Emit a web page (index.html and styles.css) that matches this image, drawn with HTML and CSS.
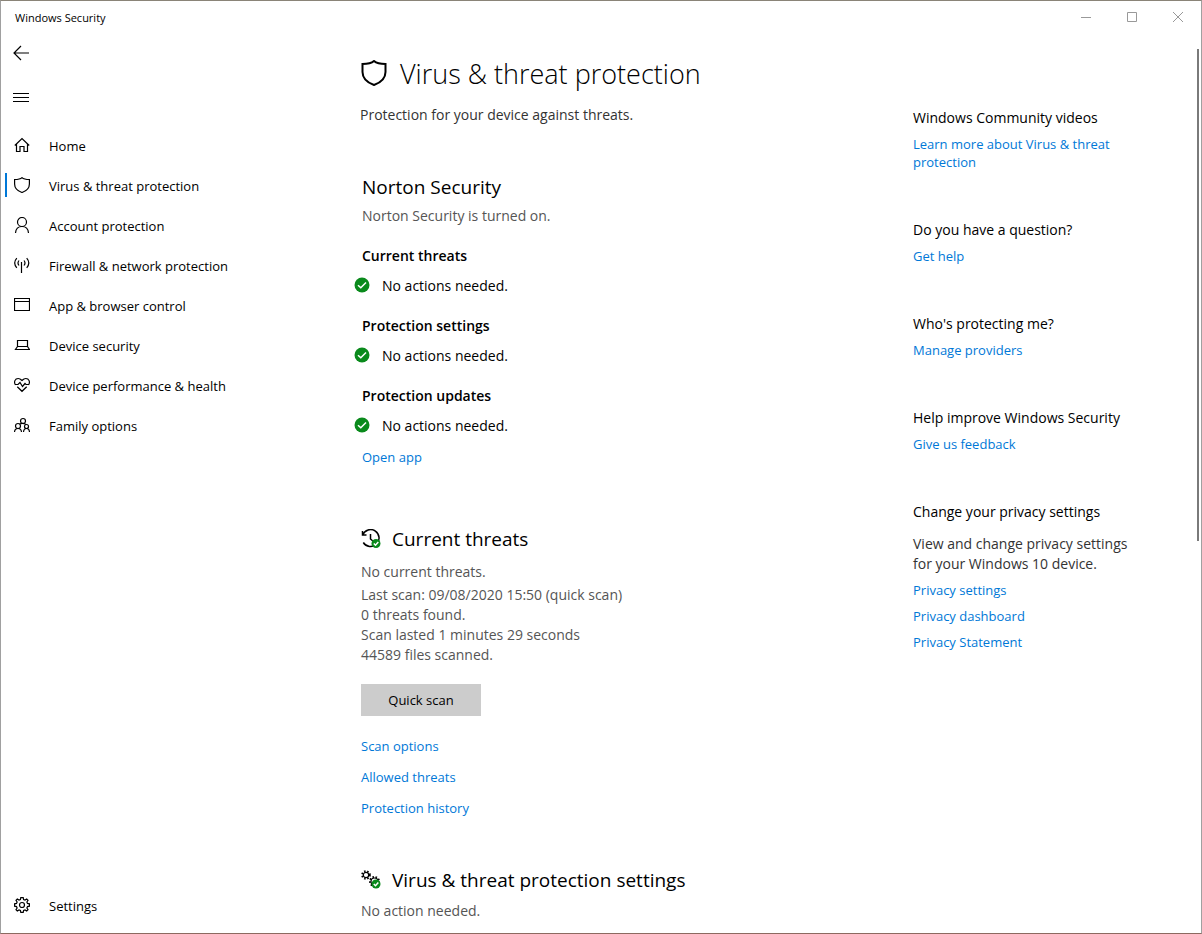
FILE: index.html
```html
<!DOCTYPE html>
<html lang="en">
<head>
    <meta charset="UTF-8">
    <meta name="viewport" content="width=device-width, initial-scale=1.0">
    <title>Windows Security</title>
    <link rel="stylesheet" href="styles.css">
</head>

<body>

    <div class="window">

        <header class="titlebar">
            <span class="titlebar-text">Windows Security</span>
            <div class="window-buttons">
                <button type="button" aria-label="Minimize"><svg width="10" height="10" viewBox="0 0 10 10"><path d="M0 5.5H10"/></svg></button>
                <button type="button" aria-label="Maximize"><svg width="10" height="10" viewBox="0 0 10 10"><path d="M.5 .5H9.5V9.5H.5Z"/></svg></button>
                <button type="button" aria-label="Close"><svg width="10" height="10" viewBox="0 0 10 10"><path d="M0 0L10 10M10 0L0 10"/></svg></button>
            </div>
        </header>

        <nav class="sidebar">
            <button type="button" class="nav-button" aria-label="Back">
                <svg width="16" height="16" viewBox="0 0 16 16"><path d="M16 8H1M8 1L1 8L8 15"/></svg>
            </button>
            <button type="button" class="nav-button" aria-label="Menu">
                <svg width="16" height="16" viewBox="0 0 16 16"><path d="M0 4.5H16M0 8.5H16M0 12.5H16"/></svg>
            </button>

            <ul class="menu">
                <li><a href="#home">
                    <svg width="16" height="16" viewBox="0 0 16 16"><path d="M.8 8.500L8 1.500L15.200 8.500M2.500 7V14.500H6V9.500H10V14.500H13.500V7"/></svg>
                    Home</a></li>
                <li><a href="#virus" class="active">
                    <svg width="16" height="16" viewBox="0 0 16 16"><path d="M8 .6C6.500 2 3.500 2.500 .6 2.500V7C.6 11 3.500 14 8 15.500C12.500 14 15.400 11 15.400 7V2.500C12.500 2.500 9.500 2 8 .6Z"/></svg>
                    Virus &amp; threat protection</a></li>
                <li><a href="#account">
                    <svg width="16" height="16" viewBox="0 0 16 16"><circle cx="8" cy="5" r="4.500"/><path d="M1.500 16C1.800 12 4.500 9.500 8 9.500S14.200 12 14.500 16"/></svg>
                    Account protection</a></li>
                <li><a href="#firewall">
                    <svg width="16" height="16" viewBox="0 0 16 16"><path d="M7.500 5V16M5 3.500Q3 6 5 8.500M10 3.500Q12 6 10 8.500M2.800 1.200Q-1.400 6 2.800 10.800M12.700 1.200Q16.900 6 12.700 10.800"/></svg>
                    Firewall &amp; network protection</a></li>
                <li><a href="#app">
                    <svg width="16" height="16" viewBox="0 0 16 16"><path d="M.5 1.500H15.500V13.500H.5ZM.5 4.500H15.500"/></svg>
                    App &amp; browser control</a></li>
                <li><a href="#device">
                    <svg width="16" height="16" viewBox="0 0 16 16"><path d="M3.500 9.500V3.500H13.500V9.500M3.500 9.500H13.500L15.500 12.500H1.500Z"/></svg>
                    Device security</a></li>
                <li><a href="#performance">
                    <svg width="16" height="16" viewBox="0 0 16 16"><path d="M1.500 8C-.5 5 1 1.500 4.200 1.500C6 1.500 7 2.500 8 3.500C9 2.500 10 1.500 11.800 1.500C15 1.500 16.500 5 14.500 8M3.300 9.700L8 14.300L12.700 9.700M1.500 7.500H4L6 5.500L8.500 9.500L11 6.500L12 7.500H14.500"/></svg>
                    Device performance &amp; health</a></li>
                <li><a href="#family">
                    <svg width="16" height="16" viewBox="0 0 16 16"><circle cx="9" cy="4" r="2.500"/><circle cx="4" cy="9" r="2.500"/><circle cx="12.500" cy="9.500" r="2"/><path d="M.5 15C.7 12.500 2 11.500 4 11.500S7.300 12.500 7.500 15M9.500 15C9.700 12.500 10.800 11.500 12.500 11.500S15.300 12.500 15.500 15M5.500 7Q9 5.500 12 7.500"/></svg>
                    Family options</a></li>
            </ul>

            <a href="#settings" class="menu-settings">
                <svg width="16" height="16" viewBox="0 0 16 16"><circle cx="8" cy="8" r="2.500"/><path d="M6.800 .6H9.200L9.600 2.500L11 3.100L12.700 2L14 3.300L12.900 5L13.500 6.400L15.400 6.800V9.200L13.500 9.600L12.900 11L14 12.700L12.700 14L11 12.900L9.600 13.500L9.200 15.400H6.800L6.400 13.500L5 12.900L3.300 14L2 12.700L3.100 11L2.500 9.600L.6 9.200V6.800L2.500 6.400L3.100 5L2 3.300L3.300 2L5 3.100L6.400 2.500Z"/></svg>
                Settings</a>
        </nav>

        <main class="content">
            <h1>
                <svg width="26" height="26" viewBox="0 0 26 26"><path d="M13 1C10.500 3.200 6 4 1.500 4V12C1.500 18 6 22.500 13 25C20 22.500 24.500 18 24.500 12V4C20 4 15.500 3.200 13 1Z"/></svg>
                Virus &amp; threat protection</h1>
            <p class="intro">Protection for your device against threats.</p>

            <section class="provider">
                <h2>Norton Security</h2>
                <p class="note">Norton Security is turned on.</p>
                <h3>Current threats</h3>
                <p class="status"><svg class="check" width="16" height="16" viewBox="0 0 16 16"><circle cx="8" cy="8" r="7.500"/><path d="M4 8.200L6.800 10.800L12 5.500"/></svg>No actions needed.</p>
                <h3>Protection settings</h3>
                <p class="status"><svg class="check" width="16" height="16" viewBox="0 0 16 16"><circle cx="8" cy="8" r="7.500"/><path d="M4 8.200L6.800 10.800L12 5.500"/></svg>No actions needed.</p>
                <h3>Protection updates</h3>
                <p class="status"><svg class="check" width="16" height="16" viewBox="0 0 16 16"><circle cx="8" cy="8" r="7.500"/><path d="M4 8.200L6.800 10.800L12 5.500"/></svg>No actions needed.</p>
                <a href="#open">Open app</a>
            </section>

            <section class="threats">
                <h2>
                    <svg width="20" height="20" viewBox="0 0 20 20"><path d="M1.500 2V6H5.500M1.700 5.800A8.500 8.500 0 1 1 2.300 13.500M9.500 5V10L12.500 12.500" stroke-width="1.500"/><g class="check"><circle cx="15" cy="14.500" r="4.500"/><path d="M12.800 14.500L14.500 16.200L17.300 13.100"/></g></svg>
                    Current threats</h2>
                <p class="note">No current threats.</p>
                <p class="scan">Last scan: 09/08/2020 15:50 (quick scan)<br>
                    0 threats found.<br>
                    Scan lasted 1 minutes 29 seconds<br>
                    44589 files scanned.</p>
                <button type="button" class="scan-button">Quick scan</button>
                <ul class="links">
                    <li><a href="#options">Scan options</a></li>
                    <li><a href="#allowed">Allowed threats</a></li>
                    <li><a href="#history">Protection history</a></li>
                </ul>
            </section>

            <section class="protection">
                <h2>
                    <svg width="20" height="20" viewBox="0 0 20 20"><circle cx="5" cy="5" r="2.700"/><circle class="teeth" cx="5" cy="5" r="3.800"/><circle cx="13.500" cy="11.500" r="3.500"/><circle class="teeth" cx="13.500" cy="11.500" r="4.500"/><g class="check"><circle cx="15" cy="14" r="4.500"/><path d="M12.800 14L14.500 15.700L17.300 12.600"/></g></svg>
                    Virus &amp; threat protection settings</h2>
                <p class="note">No action needed.</p>
            </section>
        </main>

        <aside class="help">
            <section>
                <h4>Windows Community videos</h4>
                <a href="#learn">Learn more about Virus &amp; threat protection</a>
            </section>
            <section>
                <h4>Do you have a question?</h4>
                <a href="#help">Get help</a>
            </section>
            <section>
                <h4>Who's protecting me?</h4>
                <a href="#providers">Manage providers</a>
            </section>
            <section>
                <h4>Help improve Windows Security</h4>
                <a href="#feedback">Give us feedback</a>
            </section>
            <section>
                <h4>Change your privacy settings</h4>
                <p>View and change privacy settings for your Windows 10 device.</p>
                <a href="#privacy">Privacy settings</a>
                <a href="#dashboard">Privacy dashboard</a>
                <a href="#statement">Privacy Statement</a>
            </section>
        </aside>

        <div class="scrollbar"></div>
    </div>

</body>
</html>
```

FILE: styles.css
```css
@charset "utf-8";

*{    box-sizing: border-box;    margin: 0px;    padding: 0px;}

body{
    font-family: "Open Sans", "Noto Sans", sans-serif;
    font-size: 14px;
    line-height: 20px;
    color: #000;
    background: #fff;
}

a{
    color: #0078d7;
    font-size: 13px;
    text-decoration: none;
}

ul{    list-style: none;}

button{
    font-family: inherit;
    color: inherit;
    border: none;
    background: none;
}

svg{
    flex: none;
    fill: none;
    stroke: #000;
    stroke-width: 1.2px;
}

/* window frame */
.window{
    display: grid;
    grid-template-columns: 353px 1fr 280px 8px;
    grid-template-rows: 34px 1fr;
    height: 100vh;
    overflow: hidden;
    border: 1px solid #a0a0a0;
    border-top-color: #8a8478;
    border-bottom-color: #8c6a60;
}

.titlebar{
    grid-column: 1 / -1;
    display: flex;
    justify-content: space-between;
    padding-left: 14px;
}

.titlebar-text{
    font-size: 11px;
    line-height: 34px;
}

.window-buttons{    display: flex;}

.window-buttons button{
    width: 46px;
    height: 32px;
}

.window-buttons svg{
    stroke: #999;
    stroke-width: 1px;
}

/* left menu */
.sidebar{
    display: flex;
    flex-direction: column;
    min-height: 0;
    padding-bottom: 7px;
}

.nav-button{
    display: flex;
    align-items: center;
    width: 48px;
    height: 36px;
    padding-left: 12px;
    margin-bottom: 8px;
}

.menu{    margin-top: 3px;}

.menu a, .menu-settings{
    display: flex;
    align-items: center;
    gap: 19px;
    height: 40px;
    padding-left: 13px;
    color: #000;
}

.menu svg, .menu-settings svg{    margin-bottom: 2px;}

.menu .active{
    background: linear-gradient(#0078d7, #0078d7) 4px 7px / 2px 24px no-repeat;
}

.menu-settings{    margin-top: auto;}

/* middle column */
.content{
    min-height: 0;
    overflow: hidden;
    padding-top: 21px;
}

h1{
    display: flex;
    align-items: center;
    gap: 13px;
    padding-left: 7px;
    font-size: 27px;
    font-weight: 300;
    line-height: 36px;
}

h1 svg{
    margin-bottom: 3px;
    stroke-width: 2px;
}

h2{
    display: flex;
    align-items: center;
    gap: 11px;
    font-size: 19px;
    font-weight: 400;
    line-height: 28px;
}

h3{
    margin-top: 20px;
    font-size: 14px;
    font-weight: 600;
}

.intro{
    margin-top: 13px;
    padding-left: 6px;
    color: #333;
}

.note, .scan{    color: #555;}

.content section{    padding-left: 7px;}

.content .provider{
    margin-top: 48px;
    padding-left: 8px;
}

.provider .note{    margin-top: 5px;}

.status{
    display: flex;
    align-items: center;
    gap: 12px;
    margin-top: 10px;
    margin-left: -8px;
}

.status svg{    margin-bottom: 2px;}

.provider a{
    display: block;
    margin-top: 11px;
}

.check circle{
    fill: #0a8a1c;
    stroke: none;
}

.check path{
    stroke: #fff;
    stroke-width: 1.5px;
}

.threats{    margin-top: 58px;}

.threats .note{    margin-top: 9px;}

.scan{    margin-top: 3px;}

.scan-button{
    width: 120px;
    height: 32px;
    margin-top: 19px;
    font-size: 13px;
    background: #ccc;
}

.links{    margin-top: 20px;}

.links li{    margin-bottom: 11px;}

.protection{    margin-top: 48px;}

.protection .note{    margin-top: 7px;}

.teeth{
    stroke-width: 2px;
    stroke-dasharray: 1.5 1.6;
}

/* right column */
.help{
    padding-top: 73px;
    padding-right: 52px;
}

.help section{    margin-bottom: 49px;}

.help h4{
    font-size: 14px;
    font-weight: 400;
    white-space: nowrap;
}

.help a{
    display: block;
    margin-top: 7px;
    line-height: 18px;
}

.help a + a{    margin-top: 8px;}

.help p{
    margin-top: 12px;
    color: #333;
}

.scrollbar{
    width: 2px;
    height: 492px;
    margin-top: 14px;
    margin-left: 4px;
    background: #7a7a7a;
}
```
